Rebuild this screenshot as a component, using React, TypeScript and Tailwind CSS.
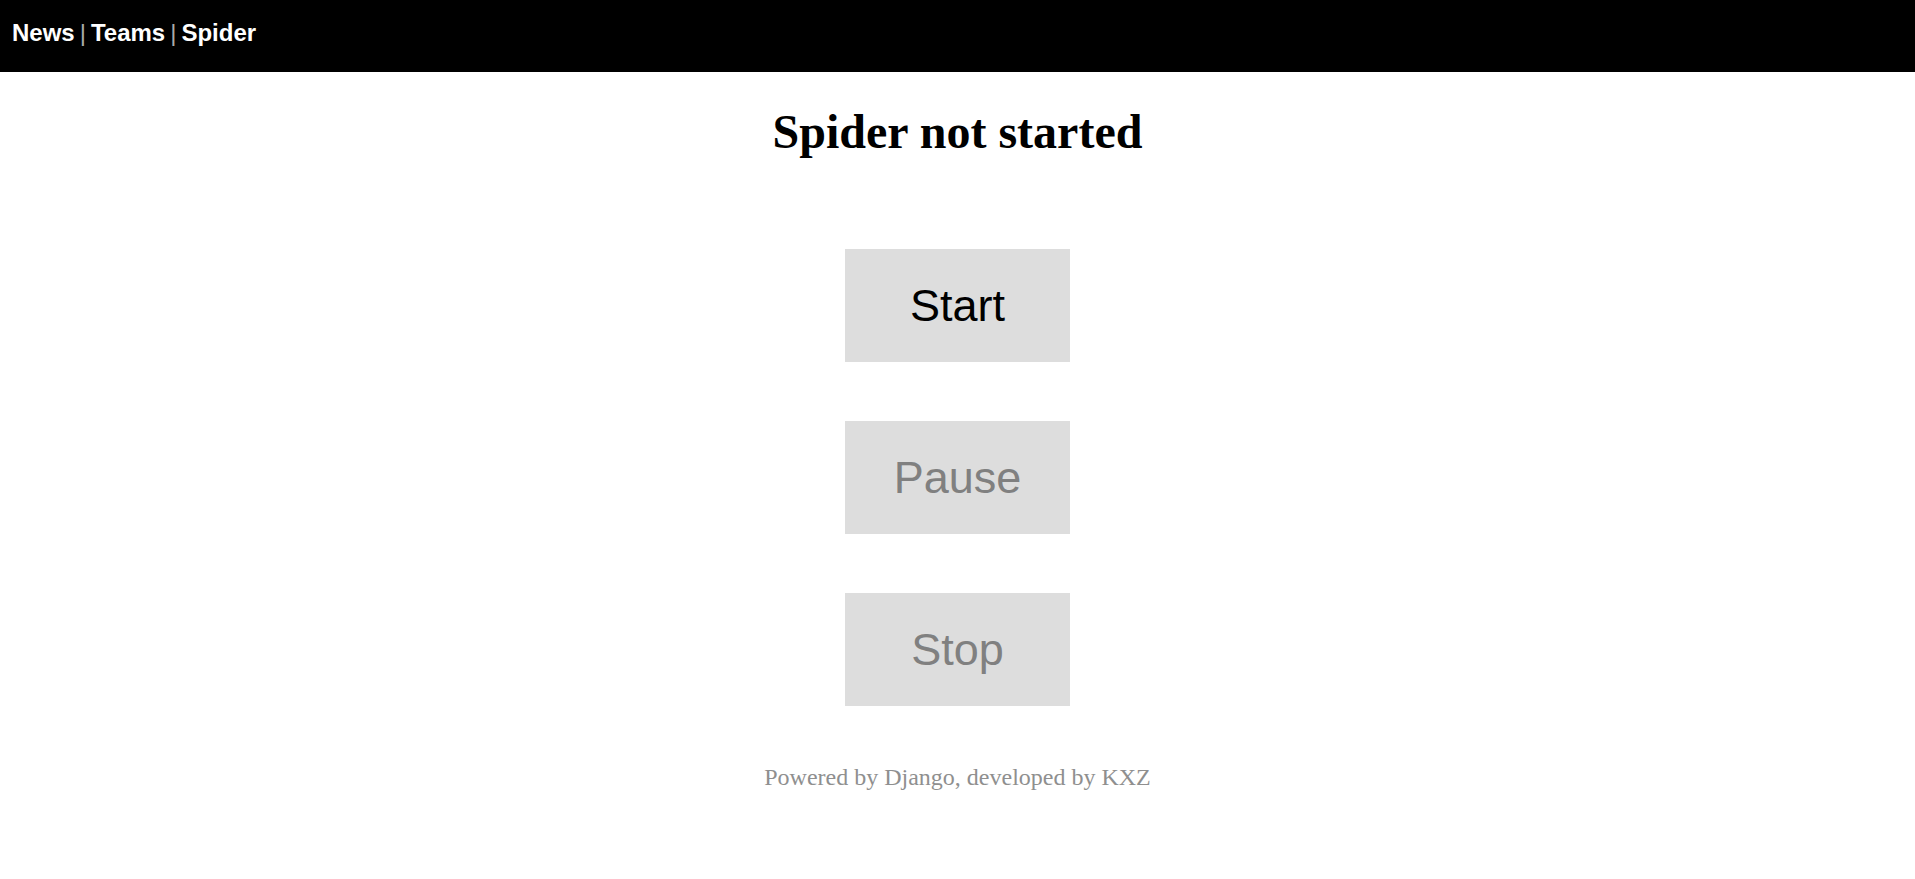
import React from 'react';

const navLinks = ['News', 'Teams', 'Spider'];

const buttons = [
    { label: 'Start', enabled: true },
    { label: 'Pause', enabled: false },
    { label: 'Stop', enabled: false },
];

export default function App() {
    return (
        <div className="min-h-screen bg-white">
            {/* ナビゲーション */}
            <header className="h-[72px] bg-black pl-[12px] pt-[15px]">
                <nav className="flex items-baseline font-['Liberation_Sans',Arial,sans-serif] text-[24px] leading-normal">
                    {navLinks.map((link, i) => (
                        <React.Fragment key={link}>
                            {i > 0 && <span className="mx-[5px] font-normal text-[#aaaaaa]">|</span>}
                            <a href="#" className="font-bold text-white">
                                {link}
                            </a>
                        </React.Fragment>
                    ))}
                </nav>
            </header>

            <main className="flex flex-col items-center">
                <h1 className="mt-[24px] font-['Liberation_Serif','Times_New_Roman',serif] text-[48px] font-bold leading-normal text-black">
                    Spider not started
                </h1>

                <div className="mt-[81px] flex flex-col items-center gap-[59px]">
                    {buttons.map((b) => (
                        <button
                            key={b.label}
                            disabled={!b.enabled}
                            className={
                                b.enabled
                                    ? "h-[113px] w-[225px] bg-[#dddddd] font-['Liberation_Sans',Arial,sans-serif] text-[45px] text-black"
                                    : "h-[113px] w-[225px] bg-[#dddddd] font-['Liberation_Sans',Arial,sans-serif] text-[45px] text-[#808080]"
                            }
                        >
                            {b.label}
                        </button>
                    ))}
                </div>

                <footer className="mt-[53px] font-['Liberation_Serif','Times_New_Roman',serif] text-[24px] leading-normal text-[#8f8f8f]">
                    Powered by Django, developed by KXZ
                </footer>
            </main>
        </div>
    );
}
